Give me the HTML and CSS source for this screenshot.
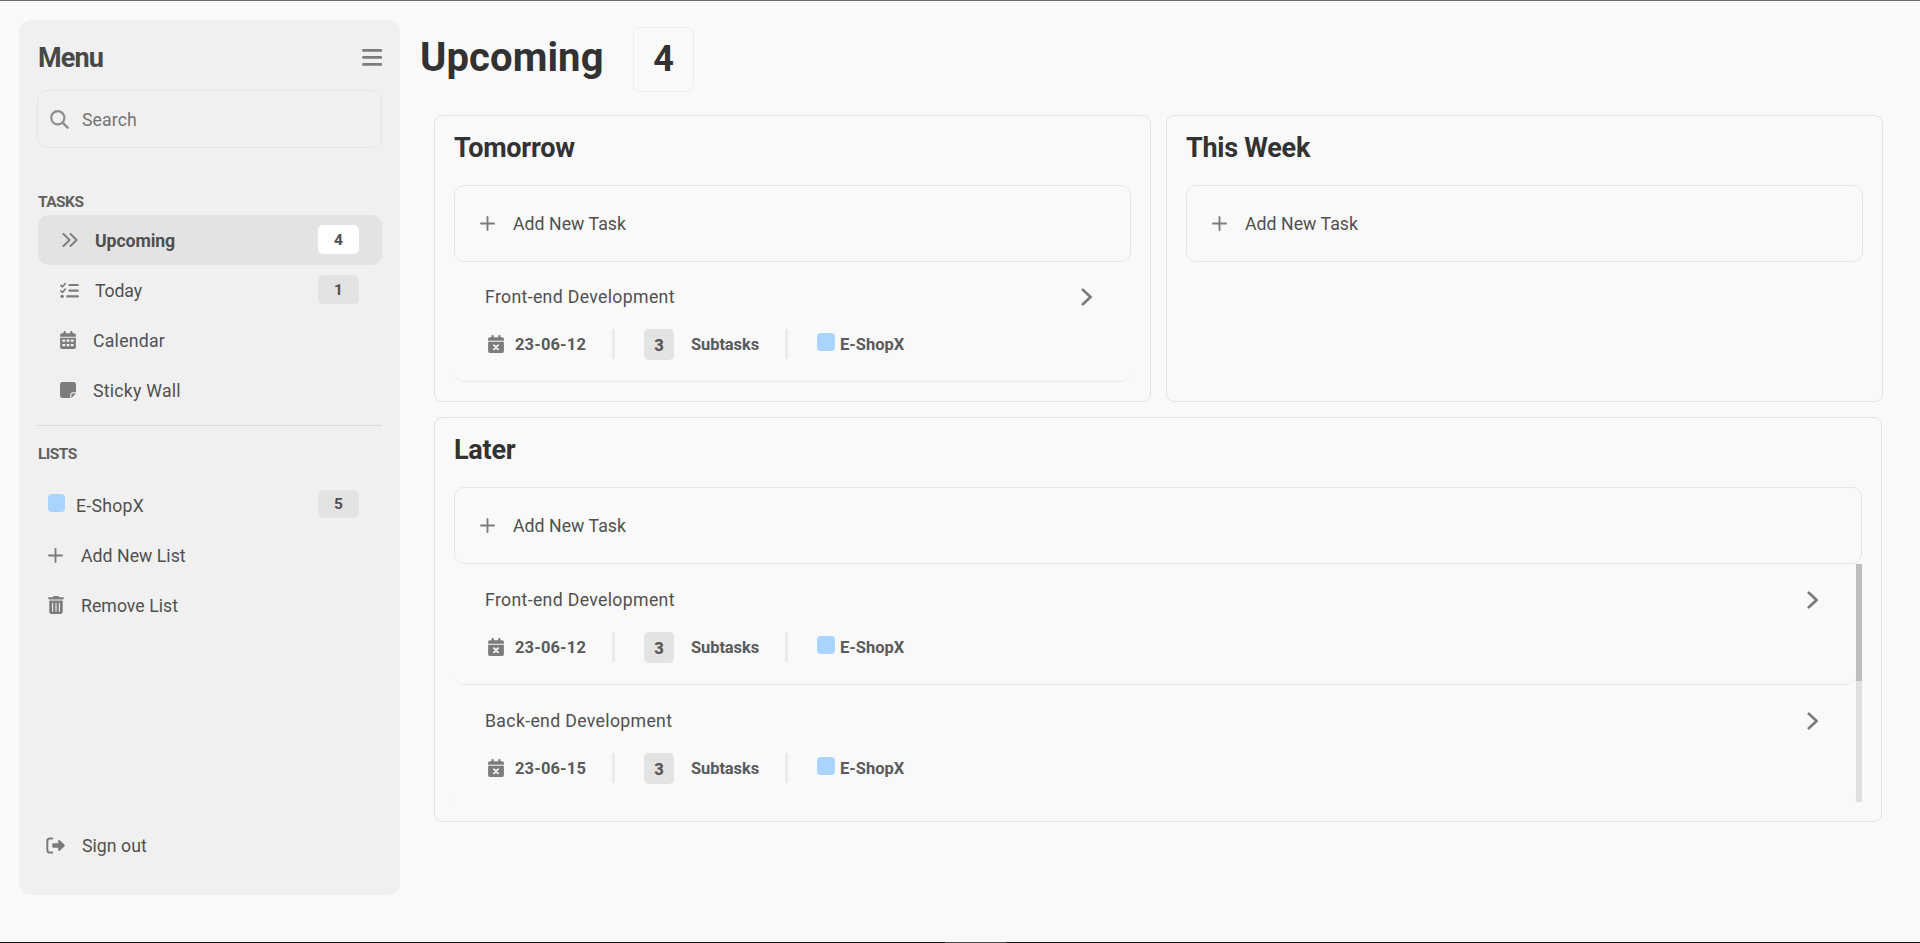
FILE: index.html
```
<!DOCTYPE html>
<html lang="en">
<head>
<meta charset="utf-8">
<title>Upcoming</title>
<link rel="stylesheet" href="styles.css">
</head>
<body>
<svg class="defs" aria-hidden="true">
  <symbol id="bars" viewBox="0 0 20 18"><path d="M1.4 2.4h17.4M1.4 9.4h17.4M1.4 16.4h17.4" fill="none" stroke="currentColor" stroke-width="2.7" stroke-linecap="round"/></symbol>
  <symbol id="search" viewBox="0 0 19 19"><circle cx="7.800" cy="7.800" r="6.600" fill="none" stroke="currentColor" stroke-width="2.200"/><path d="M12.600 12.600L17.600 17.600" fill="none" stroke="currentColor" stroke-width="2.400" stroke-linecap="round"/></symbol>
  <symbol id="angles" viewBox="0 0 16 14"><path d="M1.500 1l6.100 6-6.100 6M8.500 1l6.100 6-6.100 6" fill="none" stroke="currentColor" stroke-width="1.900" stroke-linecap="round" stroke-linejoin="round"/></symbol>
  <symbol id="check-list" viewBox="0 0 19 17"><path d="M.9 3.300l1.600 1.500L5.300 1.500M.9 8.900l1.600 1.500L5.300 7.100" fill="none" stroke="currentColor" stroke-width="1.600" stroke-linecap="round" stroke-linejoin="round"/><path d="M9.500 3H17.800M9.500 8.700H17.800M7.300 14.400H17.800" fill="none" stroke="currentColor" stroke-width="2.200" stroke-linecap="round"/><circle cx="2.100" cy="14.400" r="1.700" fill="currentColor"/></symbol>
  <symbol id="calendar" viewBox="0 0 448 512"><path fill="currentColor" fill-rule="evenodd" d="M128 0c17.700 0 32 14.300 32 32v32h128V32c0-17.700 14.300-32 32-32s32 14.300 32 32v32h48c26.500 0 48 21.500 48 48v48H0v-48c0-26.500 21.500-48 48-48h48V32c0-17.700 14.300-32 32-32zM0 192h448v272c0 26.500-21.500 48-48 48H48c-26.500 0-48-21.500-48-48zM64 240v64h80v-64zM184 240v64h80v-64zM304 240v64h80v-64zM64 368v64h80v-64zM184 368v64h80v-64zM304 368v64h80v-64z"/></symbol>
  <symbol id="calendar-x" viewBox="0 0 448 512"><path fill="currentColor" d="M128 0c17.700 0 32 14.300 32 32v32h128V32c0-17.700 14.300-32 32-32s32 14.300 32 32v32h48c26.500 0 48 21.500 48 48v48H0v-48c0-26.500 21.500-48 48-48h48V32c0-17.700 14.300-32 32-32zM0 192h448v272c0 26.500-21.500 48-48 48H48c-26.500 0-48-21.500-48-48z"/><path d="M165 290l118 118M283 290L165 408" stroke="#f9f9f9" stroke-width="50" stroke-linecap="round"/></symbol>
  <symbol id="note" viewBox="0 0 448 448"><path fill="currentColor" d="M64 0h320c35 0 64 29 64 64v224H352c-35 0-64 29-64 64v96H64c-35 0-64-29-64-64V64C0 29 29 0 64 0zM448 323l-128 125v-96c0-17 14-29 32-29z"/></symbol>
  <symbol id="plus" viewBox="0 0 15 15"><path d="M7.500 1v13M1 7.500h13" fill="none" stroke="currentColor" stroke-width="1.900" stroke-linecap="round"/></symbol>
  <symbol id="trash" viewBox="0 0 448 512"><path fill="currentColor" d="M135 18C141 7 152 0 164 0h120c12 0 23 7 29 18l7 14h96c18 0 32 14 32 32s-14 32-32 32H32C14 96 0 82 0 64s14-32 32-32h96zM32 128h384v320c0 35-29 64-64 64H96c-35 0-64-29-64-64z"/><path d="M128 208v224M224 208v224M320 208v224" stroke="#f0f0f0" stroke-width="30" stroke-linecap="round"/></symbol>
  <symbol id="sign-out" viewBox="0 0 19 17"><path d="M6.200 1.500H3.900A2.600 2.600 0 0 0 1.300 4.100v8.800a2.600 2.600 0 0 0 2.600 2.600h2.300" fill="none" stroke="currentColor" stroke-width="2" stroke-linecap="round"/><path fill="currentColor" d="M12.200 3.900c0-.9 1-1.300 1.600-.7l4.700 4.600c.4.400.4 1 0 1.400l-4.700 4.600c-.6.600-1.600.2-1.600-.7v-2.300H7.300c-.6 0-1-.5-1-1V7.200c0-.6.400-1 1-1h4.900z"/></symbol>
  <symbol id="chevron" viewBox="0 0 12 18"><path d="M1.800 1.800L9.600 9l-7.800 7.200" fill="none" stroke="currentColor" stroke-width="2.700" stroke-linecap="round" stroke-linejoin="round"/></symbol>
</svg>

<div class="page">
  <aside class="sidebar">
    <header class="menu-head"><h2 class="menu-title">Menu</h2><svg class="i-bars"><use href="#bars"/></svg></header>
    <div class="search"><svg class="i-search"><use href="#search"/></svg><span>Search</span></div>
    <h3 class="group group-tasks">TASKS</h3>
    <nav>
      <a class="row nav-row active"><svg class="i-angles"><use href="#angles"/></svg><span class="label">Upcoming</span><b class="count">4</b></a>
      <a class="row nav-row"><svg class="i-list"><use href="#check-list"/></svg><span class="label today">Today</span><b class="count">1</b></a>
      <a class="row nav-row"><svg class="i-cal"><use href="#calendar"/></svg><span class="label wide">Calendar</span></a>
      <a class="row nav-row"><svg class="i-note"><use href="#note"/></svg><span class="label wide">Sticky Wall</span></a>
    </nav>
    <hr class="rule">
    <h3 class="group group-lists">LISTS</h3>
    <nav class="lists">
      <a class="row list-row"><i class="swatch"></i><span class="label wide list-name">E-ShopX</span><b class="count">5</b></a>
      <a class="row list-row"><svg class="i-plus"><use href="#plus"/></svg><span class="label">Add New List</span></a>
      <a class="row list-row"><svg class="i-trash"><use href="#trash"/></svg><span class="label">Remove List</span></a>
    </nav>
    <a class="row sign-out"><svg class="i-out"><use href="#sign-out"/></svg><span class="label">Sign out</span></a>
  </aside>

  <main class="main">
    <header class="title"><h1>Upcoming</h1><span class="total">4</span></header>
    <div class="board">
      <section class="card">
        <h2>Tomorrow</h2>
        <div class="add"><svg class="i-plus"><use href="#plus"/></svg><span>Add New Task</span></div>
        <article class="task">
          <div class="task-head"><span>Front-end Development</span><svg class="i-chevron"><use href="#chevron"/></svg></div>
          <div class="meta"><svg class="i-due"><use href="#calendar-x"/></svg><span class="date">23-06-12</span><i class="bar"></i><b class="num">3</b><span class="subs">Subtasks</span><i class="bar"></i><i class="swatch"></i><span class="tag">E-ShopX</span></div>
        </article>
      </section>
      <section class="card">
        <h2>This Week</h2>
        <div class="add"><svg class="i-plus"><use href="#plus"/></svg><span>Add New Task</span></div>
      </section>
      <section class="card later">
        <h2>Later</h2>
        <div class="add"><svg class="i-plus"><use href="#plus"/></svg><span>Add New Task</span></div>
        <div class="scroller">
          <div class="tasks">
            <article class="task">
              <div class="task-head"><span>Front-end Development</span><svg class="i-chevron"><use href="#chevron"/></svg></div>
              <div class="meta"><svg class="i-due"><use href="#calendar-x"/></svg><span class="date">23-06-12</span><i class="bar"></i><b class="num">3</b><span class="subs">Subtasks</span><i class="bar"></i><i class="swatch"></i><span class="tag">E-ShopX</span></div>
            </article>
            <article class="task">
              <div class="task-head"><span>Back-end Development</span><svg class="i-chevron"><use href="#chevron"/></svg></div>
              <div class="meta"><svg class="i-due"><use href="#calendar-x"/></svg><span class="date">23-06-15</span><i class="bar"></i><b class="num">3</b><span class="subs">Subtasks</span><i class="bar"></i><i class="swatch"></i><span class="tag">E-ShopX</span></div>
            </article>
          </div>
          <div class="track"><div class="thumb"></div></div>
        </div>
      </section>
    </div>
  </main>
  <footer class="edge"><i class="handle"></i></footer>
</div>
</body>
</html>
```
FILE: styles.css
```
* { box-sizing: border-box; }
body { margin: 0; background: #f9f9f9; color: #505050; font: 500 17.700px/24px Roboto, "Liberation Sans", sans-serif; }
h1, h2, h3 { margin: 0; white-space: nowrap; }
svg { display: block; flex: none; color: #7c7c7c; }
span { white-space: nowrap; }
.defs { display: none; }
.page { height: 943px; border-top: 1px solid #696969; display: grid; grid-template: 941px 1px / 400px 1fr; overflow: hidden; }

.sidebar { margin: 19px 0 47px 19px; padding: 0 18px; background: #f0f0f0; border-radius: 12px; display: flex; flex-direction: column; }
.menu-head { display: flex; justify-content: space-between; align-items: center; height: 70px; padding: 6px 0 0 1px; }
.menu-title { font-size: 27px; line-height: 32px; font-weight: 700; color: #484848; letter-spacing: -.9px; }
.i-bars { width: 20px; height: 18px; margin-bottom: 2px; }
.search { display: flex; align-items: center; height: 58px; border: 1px solid #e5e5e5; border-radius: 10px; padding-left: 12px; gap: 13px; font-weight: 400; color: #757575; letter-spacing: .1px; }
.search span { padding-top: 2px; }
.i-search { width: 19px; height: 19px; color: #8f8f8f; }
.group { font-size: 15.500px; line-height: 20px; font-weight: 700; color: #606060; padding-left: 1px; letter-spacing: -.550px; }
.group-tasks { margin-top: 44px; }
.row { display: flex; align-items: center; height: 50px; }
.nav-row { margin-left: 1px; padding: 0 23px 0 22px; }
.group-tasks + nav { margin-top: 3px; }
.active { background: #e3e3e3; border-radius: 10px; }
.label { padding-top: 2px; font-weight: 400; letter-spacing: .03px; }
.wide { letter-spacing: .240px; }
.today { letter-spacing: -.130px; }
.active .label { font-weight: 700; letter-spacing: -.1px; }
.count { margin-left: auto; width: 41px; height: 29px; margin-bottom: 1px; border-radius: 5px; background: #e3e3e3; font-size: 15.500px; line-height: 31px; font-weight: 700; text-align: center; }
.active .count { background: #fff; }
.i-angles { width: 16px; height: 14px; margin: 0 17px 0 2px; }
.i-list { width: 19px; height: 17px; margin-right: 16px; }
.i-cal { width: 16px; height: 18px; margin-right: 17px; }
.i-note { width: 16px; height: 16px; margin-right: 17px; }
.rule { width: 345px; height: 1px; border: 0; margin: 10px 0 0; background: #dadada; }
.group-lists { margin-top: 18px; }
.lists { margin-top: 16px; }
.list-row { padding: 0 23px 0 11px; }
.list-row .count { height: 28px; line-height: 29px; margin-bottom: 2px; }
.swatch { width: 18px; height: 18px; border-radius: 4px; background: #a8d4ff; flex: none; margin-bottom: 4px; }
.list-row .swatch { width: 17px; }
.list-name { margin-left: 11px; }
.i-plus { width: 15px; height: 15px; }
.list-row .i-plus { margin-right: 18px; }
.i-trash { width: 16px; height: 18px; margin-right: 17px; }
.sign-out { margin-top: auto; margin-bottom: 25px; padding-left: 9px; }
.i-out { width: 19px; height: 17px; margin-right: 17px; }

.main { padding: 26px 0 0 20px; color: #505050; }
.title { display: flex; height: 65px; align-items: center; color: #323232; }
h1 { width: 213px; font-size: 40px; line-height: 48px; font-weight: 700; margin-top: -3px; letter-spacing: .1px; }
.total { width: 61px; height: 65px; border: 1px solid #ececec; border-radius: 7px; font-size: 36px; line-height: 62px; font-weight: 700; text-align: center; }
.board { margin: 23px 0 0 14px; width: 1449px; display: grid; grid-template-columns: 717px 717px; grid-template-rows: 287px 405px; gap: 15px; }
.card { border: 1px solid #e3e3e3; border-radius: 8px; padding: 15px 19px 0; }
.later { grid-column: 1 / 3; width: 1448px; }
.card h2 { font-size: 27px; line-height: 34px; font-weight: 700; color: #323232; letter-spacing: -.250px; }
.add { height: 77px; margin-top: 20px; border: 1px solid #e6e6e6; border-radius: 10px; display: flex; align-items: center; padding-left: 25px; gap: 18px; font-weight: 400; letter-spacing: .04px; }
.later .add span { padding-top: 1px; }
.task { height: 120px; border-bottom: 1px solid #e8e8e8; border-radius: 10px; padding: 23px 38px 0 31px; }
.task-head { display: flex; justify-content: space-between; align-items: center; font-weight: 400; letter-spacing: .330px; }
.i-chevron { width: 12px; height: 18px; }
.meta { display: flex; align-items: center; height: 31px; margin-top: 20px; padding-left: 3px; font-size: 16.500px; font-weight: 700; color: #5a5a5a; }
.meta span { padding-top: 1px; }
.i-due { width: 16px; height: 18px; margin: 0 11px 1px 0; }
.date { width: 97px; letter-spacing: .150px; }
.bar { width: 3px; height: 30px; background: #ebebeb; flex: none; margin-bottom: 1px; }
.num { width: 30px; height: 31px; margin: 0 17px 0 29px; border-radius: 5px; background: #e3e3e3; line-height: 33px; text-align: center; }
.subs { width: 94px; letter-spacing: -.1px; }
.meta .swatch { margin-left: 29px; margin-bottom: 6px; }
.tag { margin-left: 5px; }
.scroller { display: flex; height: 238px; overflow: hidden; }
.tasks { flex: 1; height: 238px; overflow: hidden; }
.scroller .task { height: 121px; padding: 24px 37px 0 31px; }
.track { width: 6px; background: #e0e0e0; }
.thumb { height: 117px; background: #bdbdbd; }
.edge { grid-column: 1 / 3; background: #0e1014; display: flex; }
.handle { width: 61px; margin-left: 945px; background: #4a4b50; }
```
